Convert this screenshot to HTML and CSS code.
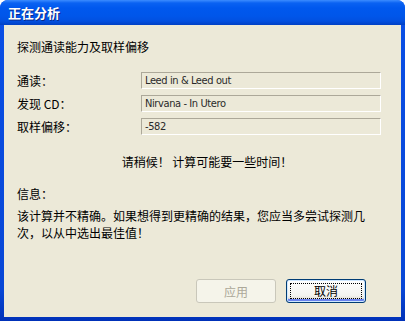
FILE: index.html
```html
<!DOCTYPE html>
<html lang="zh">
<head>
    <meta charset="UTF-8">
    <meta name="viewport" content="width=device-width, initial-scale=1.0">
    <title>正在分析</title>
    <link rel="stylesheet" href="styles.css">
</head>
<body>

    <div class="window">
        <div class="titlebar">正在分析</div>

        <div class="client">
            <p class="heading">探测通读能力及取样偏移</p>

            <div class="fields">
                <div class="row">
                    <span class="label">通读：</span>
                    <span class="field">Leed in &amp; Leed out</span>
                </div>
                <div class="row">
                    <span class="label">发现 CD：</span>
                    <span class="field">Nirvana - In Utero</span>
                </div>
                <div class="row">
                    <span class="label">取样偏移：</span>
                    <span class="field">-582</span>
                </div>
            </div>

            <p class="wait">请稍候！ 计算可能要一些时间！</p>

            <p class="info-title">信息：</p>
            <p class="info">该计算并不精确。如果想得到更精确的结果，您应当多尝试探测几次，以从中选出最佳值！</p>

            <div class="buttons">
                <button class="btn" disabled>应用</button>
                <button class="btn default"><span class="focus">取消</span></button>
            </div>
        </div>
    </div>

</body>
</html>
```

FILE: styles.css
```css
html, body {
    margin: 0;
    padding: 0;
    background: #ffffff;
}

body {
    font-family: "Noto Sans CJK SC", "Liberation Sans", sans-serif;
    font-size: 12px;
    color: #000;
}

.window {
    width: 405px;
    height: 321px;
    display: flex;
    flex-direction: column;
    background: linear-gradient(to bottom, #0a4fe6, #0847d6 90%, #0031b8);
    border-radius: 8px 8px 0 0;
    overflow: hidden;
}

.titlebar {
    height: 25px;
    box-sizing: border-box;
    padding: 3px 0 0 8px;
    color: #fff;
    font-weight: bold;
    font-size: 13px;
    line-height: 20px;
    text-shadow: 1px 1px 0 #0a2a8a;
    background: linear-gradient(to bottom,
        #3c8cff 0px, #0a62f2 3px, #0058ee 8px, #0056ea 16px, #0250e0 21px, #0040c4 25px);
}

.client {
    flex: 1;
    margin: 0 4px 4px;
    background: #ece9d8;
    padding: 14px 20px 0 13px;
    display: flex;
    flex-direction: column;
}

.client p {
    margin: 0;
    line-height: 16px;
}

.fields {
    margin-top: 17px;
    display: flex;
    flex-direction: column;
    gap: 6px;
}

.row {
    display: flex;
    align-items: center;
    height: 17px;
}

.label {
    width: 124px;
    line-height: 16px;
}

.field {
    width: 240px;
    height: 17px;
    box-sizing: border-box;
    padding: 0 0 0 3px;
    border-top: 1px solid #aca899;
    border-left: 1px solid #aca899;
    border-right: 1px solid #fff;
    border-bottom: 1px solid #fff;
    font-family: "Liberation Sans Narrow", "DejaVu Sans Condensed", "Liberation Sans", sans-serif;
    font-size: 11px;
    letter-spacing: -0.4px;
    line-height: 15px;
    color: #2a2a2a;
}

.wait {
    margin-top: 19px !important;
    text-align: center;
    padding-left: 16px;
}

.info-title {
    margin-top: 16px !important;
}

.client p.info {
    margin-top: 5px;
    width: 356px;
    line-height: 17px;
}

.buttons {
    margin-top: 38px;
    display: flex;
    justify-content: flex-end;
    gap: 10px;
    padding-right: 15px;
}

.btn {
    width: 80px;
    height: 24px;
    box-sizing: border-box;
    font-family: "Noto Sans CJK SC", sans-serif;
    font-size: 12px;
    border-radius: 3px;
    padding: 0;
    border: 1px solid #003c74;
    background: linear-gradient(to bottom, #ffffff, #f3f3ef 70%, #d6d0c5);
    color: #000;
}

.btn:disabled {
    border-color: #c9c7ba;
    background: #f5f4ea;
    color: #aca899;
}

.btn.default {
    box-shadow: inset 0 0 0 1px #cee7ff, inset 0 -2px 0 1px #6982ee;
    padding: 3px;
}

.focus {
    display: block;
    height: 100%;
    box-sizing: border-box;
    border: 1px dotted #000;
    line-height: 14px;
}
```
